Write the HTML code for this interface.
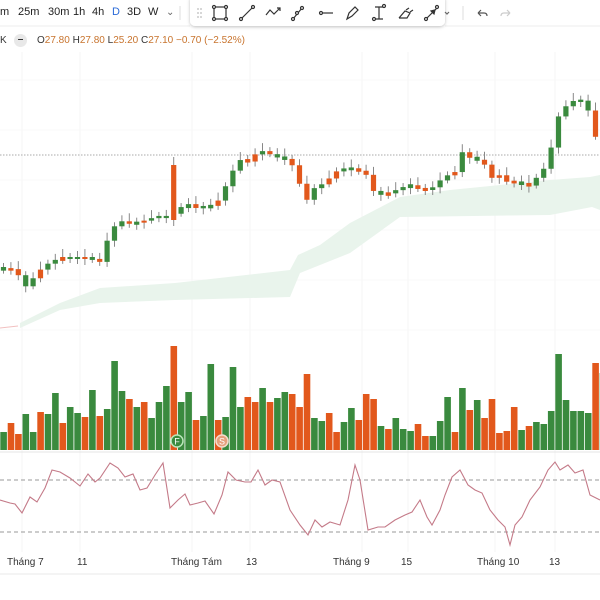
<!DOCTYPE html>
<html><head><meta charset="utf-8"><style>
html,body{margin:0;padding:0;background:#fff;width:600px;height:600px;overflow:hidden;font-family:"Liberation Sans",sans-serif}
.t{position:absolute;font-size:11px;color:#222;top:6px}
</style></head><body>
<div style="position:absolute;left:0;top:0;width:600px;height:600px">
<svg id="s" width="600" height="600" style="position:absolute;left:0;top:0"></svg>
<div class="t" style="left:0">m</div><div class="t" style="left:18px">25m</div><div class="t" style="left:48px">30m</div>
<div class="t" style="left:73px">1h</div><div class="t" style="left:92px">4h</div><div class="t" style="left:112px;color:#2a6ad8">D</div>
<div class="t" style="left:127px">3D</div><div class="t" style="left:148px">W</div><div class="t" style="left:166px;font-size:10px;top:7px;color:#666">⌄</div>
<div style="position:absolute;left:0;top:35px;font-size:10px;white-space:nowrap;color:#333">
<span style="position:absolute;left:0">K</span>
<span style="position:absolute;left:14px;top:-1px;width:13px;height:13px;border-radius:7px;background:#e8e8e8;text-align:center;line-height:12px;font-weight:bold">–</span>
<span style="position:absolute;left:37px">O<span style="color:#c8742e">27.80</span> H<span style="color:#c8742e">27.80</span> L<span style="color:#c8742e">25.20</span> C<span style="color:#c8742e">27.10</span> <span style="color:#c8742e">−0.70 (−2.52%)</span></span>
</div>
<div style="position:absolute;top:557px;font-size:10px;color:#333;left:0;width:600px">
<span style="position:absolute;left:7px">Tháng 7</span><span style="position:absolute;left:77px">11</span>
<span style="position:absolute;left:171px">Tháng Tám</span><span style="position:absolute;left:246px">13</span>
<span style="position:absolute;left:333px">Tháng 9</span><span style="position:absolute;left:401px">15</span>
<span style="position:absolute;left:477px">Tháng 10</span><span style="position:absolute;left:549px">13</span>
</div>
</div>
<script>
(function(){
const s=document.getElementById('s');let h='';
const G='#3a8a3e',O='#e2581c';
[22,80,192,250,362,408,495,555].forEach(x=>h+=`<line x1="${x}" y1="52" x2="${x}" y2="552" stroke="#f5f5f5"/>`);
[80,130,180,230,280,330].forEach(y=>h+=`<line x1="0" y1="${y}" x2="600" y2="${y}" stroke="#f8f8f8"/>`);
h+=`<line x1="0" y1="452" x2="600" y2="452" stroke="#e4e4e4"/><line x1="0" y1="574" x2="600" y2="574" stroke="#e8e8e8"/>`;
h+=`<line x1="0" y1="26" x2="190" y2="26" stroke="#ececec"/><line x1="445" y1="26" x2="600" y2="26" stroke="#ececec"/><line x1="180" y1="6" x2="180" y2="20" stroke="#ddd"/><line x1="463" y1="6" x2="463" y2="20" stroke="#ddd"/>`;
h+=`<defs><filter id="sh" x="-10%" y="-50%" width="120%" height="200%"><feDropShadow dx="0" dy="1" stdDeviation="1.5" flood-opacity=".25"/></filter></defs>`;
h+=`<rect x="190" y="-5" width="255" height="31" rx="5" fill="#fff" filter="url(#sh)"/>`;
h+=`<g stroke="#333" fill="none" stroke-width="1.2">
<g fill="#bbb" stroke="none"><circle cx="198" cy="9" r=".9"/><circle cx="201" cy="9" r=".9"/><circle cx="198" cy="13" r=".9"/><circle cx="201" cy="13" r=".9"/><circle cx="198" cy="17" r=".9"/><circle cx="201" cy="17" r=".9"/></g>
<rect x="214" y="7" width="12" height="12"/><circle cx="214" cy="7" r="1.5" fill="#fff"/><circle cx="226" cy="7" r="1.5" fill="#fff"/><circle cx="214" cy="19" r="1.5" fill="#fff"/><circle cx="226" cy="19" r="1.5" fill="#fff"/>
<path d="M241 19L253 7"/><circle cx="241" cy="19" r="1.5" fill="#fff"/><circle cx="253" cy="7" r="1.5" fill="#fff"/>
<path d="M266 15L270 10L274 14L280 8M277 8H280V11"/>
<path d="M293 19L302 8"/><circle cx="293" cy="19" r="1.5" fill="#fff"/><circle cx="297" cy="13" r="1.5" fill="#fff"/><circle cx="302" cy="8" r="1.5" fill="#fff"/>
<path d="M322 13H333"/><circle cx="321" cy="13" r="1.5" fill="#fff"/>
<path d="M347 19L349 13L355 7L358 10L352 16Z"/>
<path d="M375 7H383M379 7V19M375 19H383"/><circle cx="384" cy="6" r="1.5" fill="#fff"/><circle cx="374" cy="19" r="1.5" fill="#fff"/>
<path d="M399 18H407L410 13L405 11L399 18M406 10L409 8M410 12L413 10"/>
<path d="M426 19L437 8"/><circle cx="426" cy="19" r="1.5" fill="#fff"/><circle cx="437" cy="7" r="1.5" fill="#fff"/><path d="M431 11L435 10L434 14Z" fill="#333"/>
<path d="M445 12L447 14L449 12" stroke="#666"/>
<path d="M478 13H484Q487 13 487 16M478 13L481 10M478 13L481 16" stroke="#555"/>
<path d="M510 13H504Q501 13 501 16M510 13L507 10M510 13L507 16" stroke="#ccc"/></g>`;
const ctop=[[20,323],[60,303],[100,288],[175,283],[290,270],[298,255],[320,245],[350,223],[400,197],[450,190],[550,180],[590,177],[600,175]];
const cbot=[[600,210],[592,207],[550,215],[400,217],[350,253],[300,273],[290,297],[175,300],[100,303],[60,310],[20,328]];
h+=`<polygon points="${ctop.concat(cbot).map(p=>p.join(',')).join(' ')}" fill="#e9f4ec"/>`;
h+=`<line x1="0" y1="155" x2="600" y2="155" stroke="#aaa" stroke-dasharray="1.5,1.5"/>`;
h+=`<path d="M0 328L18 326" stroke="#f2c0c0"/>`;
const vt=[432,423,434,414,432,412,414,393,423,407,413,417,390,416,409,361,391,399,407,402,418,402,386,346,402,392,420,416,364,420,417,367,407,397,402,388,402,398,392,394,407,374,418,421,413,432,422,408,420,394,399,426,429,418,429,431,424,436,436,421,397,432,388,410,400,418,399,433,431,407,430,426,422,424,411,354,400,411,411,413,363,373];
const vc="GOOGGOGGOGGOGOGGGOGOGGGOGGOGGOGGGOOGOGGOOOGGOOGGOOOGOGGGOOGGGOGOGOOOOOGOGGGGGGGGOG";
const W=7.4;
vt.forEach((y,i)=>{const x=i*W;h+=`<rect x="${x+.3}" y="${y}" width="6.6" height="${450-y}" fill="${vc[i]=='G'?G:O}"/>`});
h+=`<circle cx="177" cy="441" r="6" fill="${G}" stroke="#b8e6b8" stroke-width="1.5"/><text x="177" y="444.5" font-size="9" fill="#fff" text-anchor="middle" font-family="Liberation Sans">F</text>`;
h+=`<circle cx="222" cy="441" r="6" fill="#e6a07c" stroke="#f5dccc" stroke-width="1.5"/><text x="222" y="444.5" font-size="9" fill="#fff" text-anchor="middle" font-family="Liberation Sans">S</text>`;
const kp=[[0,270],[10,269],[17,270],[22,290],[30,282],[40,270],[50,262],[60,258],[75,258],[90,258],[100,262],[108,238],[118,220],[130,224],[140,222],[152,218],[162,215],[169,220],[178,208],[188,205],[200,208],[215,205],[222,195],[230,175],[240,160],[250,162],[258,150],[266,152],[275,157],[290,160],[300,185],[307,200],[315,187],[325,183],[335,172],[345,168],[355,170],[365,172],[372,190],[380,195],[390,193],[400,188],[410,185],[420,190],[430,190],[438,182],[446,176],[455,172],[462,152],[470,158],[478,160],[485,165],[492,178],[500,175],[510,185],[518,180],[525,188],[533,183],[540,172],[548,165],[556,120],[563,110],[570,101],[578,101],[586,100],[593,135],[600,140]];
function iy(x){for(let k=1;k<kp.length;k++)if(x<=kp[k][0]){const a=kp[k-1],b=kp[k];return a[1]+(b[1]-a[1])*(x-a[0])/(b[0]-a[0]);}return 140;}
let prev=268;
for(let i=0;i<81;i++){const x=i*W+3.5;let c=iy(x);let o=prev;const col=vc[i]=='G'?G:O;
 let a=Math.min(o,c),b=Math.max(o,c);if(b-a<2){a-=1;b+=1;}
 if(i==23){a=165;b=220;}
 h+=`<line x1="${x}" y1="${a-4-(i%3)*2}" x2="${x}" y2="${b+3+(i%4)}" stroke="#888"/>`;
 h+=`<rect x="${x-2.6}" y="${a}" width="5.2" height="${b-a}" fill="${col}"/>`;prev=c;}
h+=`<line x1="0" y1="480" x2="600" y2="480" stroke="#999" stroke-dasharray="4,3"/><line x1="0" y1="532" x2="600" y2="532" stroke="#999" stroke-dasharray="4,3"/>`;
const r=[[0,500],[10,503],[15,504],[22,513],[30,497],[37,502],[45,488],[52,470],[60,472],[70,478],[80,486],[88,474],[95,482],[100,478],[110,463],[118,468],[125,477],[133,474],[140,490],[147,488],[155,475],[163,463],[170,508],[178,500],[185,494],[190,505],[198,503],[205,501],[214,514],[222,495],[228,472],[236,480],[245,482],[251,482],[258,470],[265,485],[272,480],[280,482],[290,510],[300,525],[308,535],[315,520],[322,527],[330,522],[340,525],[348,500],[355,465],[360,480],[368,530],[378,527],[385,527],[395,520],[405,515],[412,512],[420,500],[427,517],[432,525],[440,510],[445,495],[452,477],[460,470],[468,485],[475,490],[482,493],[490,510],[498,520],[505,527],[510,545],[515,525],[522,517],[530,500],[540,487],[548,470],[555,462],[560,470],[568,465],[575,473],[583,470],[590,495],[600,500]];
h+=`<polyline points="${r.map(p=>p.join(',')).join(' ')}" fill="none" stroke="#c47a88" stroke-width="1.1"/>`;
s.innerHTML=h;
})();
</script>
</body></html>
